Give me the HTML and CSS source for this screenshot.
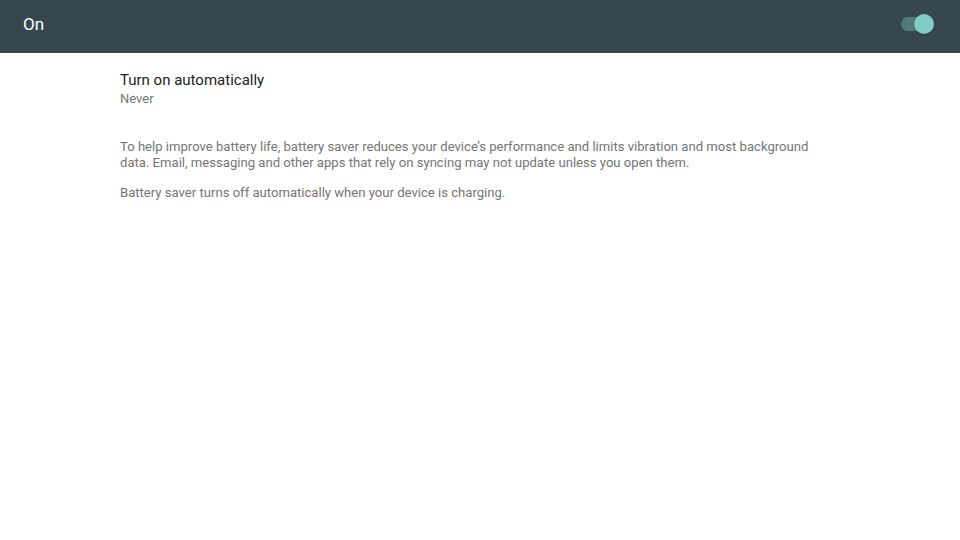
FILE: index.html
```html
<!DOCTYPE html>
<html lang="en">
  <head>
    <meta charset="UTF-8" />
    <title>Battery saver</title>
    <link rel="stylesheet" href="styles.css">
  </head>
  <body>
    <div class="header">
      <span class="header-title">On</span>
      <div class="switch on">
        <span class="switch-track"></span>
        <span class="switch-thumb"></span>
      </div>
    </div>

    <div class="main-content">
      <div class="pref">
        <div class="pref-title">Turn on automatically</div>
        <div class="pref-summary">Never</div>
      </div>
      <p class="description">
        To help improve battery life, battery saver reduces your device’s performance and limits vibration and most background
        data. Email, messaging and other apps that rely on syncing may not update unless you open them.
      </p>
      <p class="description">
        Battery saver turns off automatically when your device is charging.
      </p>
    </div>
  </body>
</html>
```

FILE: styles.css
```css
html, body {
  margin: 0;
  padding: 0;
}
body {
  font-family: Roboto, 'Noto Sans', sans-serif;
  background-color: #fff;
  color: #212121;
  width: 960px;
  height: 540px;
  overflow: hidden;
}
.header {
  background-color: #37474f;
  height: 53px;
  display: flex;
  align-items: center;
  justify-content: space-between;
  padding: 0 26px 0 23px;
}
.header-title {
  color: #fff;
  font-size: 17px;
  line-height: 20px;
  margin-bottom: 5px;
}
.switch {
  position: relative;
  width: 33px;
  height: 20px;
  margin-bottom: 6px;
}
.switch-track {
  position: absolute;
  left: 0;
  top: 3px;
  width: 27px;
  height: 14px;
  border-radius: 7px;
  background-color: #4f7a78;
}
.switch-thumb {
  position: absolute;
  right: 0;
  top: 0;
  width: 20px;
  height: 20px;
  border-radius: 50%;
  background-color: #80cbc4;
  box-shadow: 0 1px 2px rgba(0, 0, 0, 0.25);
}
.main-content {
  padding: 0 120px;
}
.pref {
  padding-top: 18px;
}
.pref-title {
  font-size: 15px;
  line-height: 19px;
  color: #212121;
}
.pref-summary {
  font-size: 13px;
  line-height: 18px;
  color: #757575;
}
.description {
  max-width: 720px;
  font-size: 13.1px;
  line-height: 16px;
  color: #757575;
  margin: 0 0 14px;
}
.pref + .description {
  margin-top: 31px;
}
```
